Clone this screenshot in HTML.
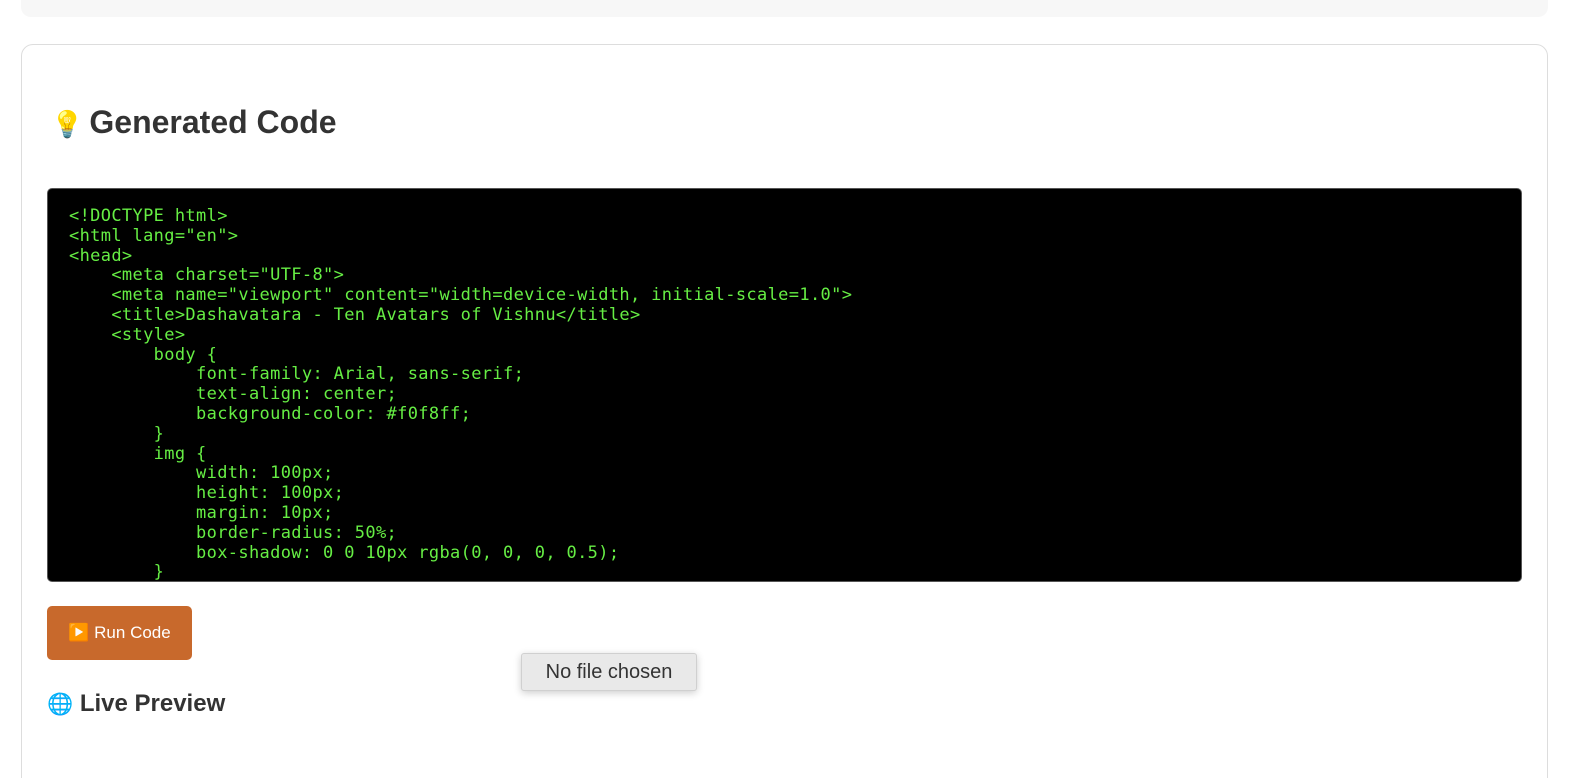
<!DOCTYPE html>
<html><head><meta charset="utf-8"><style>
html,body{margin:0;padding:0;width:1586px;height:778px;overflow:hidden;background:#fff}
body{font-family:"Liberation Sans",Arial,sans-serif}
.wrap{position:relative;width:1586px;height:778px;overflow:hidden}
.top{position:absolute;left:21px;top:-20px;width:1527px;height:37px;background:#f7f7f7;border-radius:10px}
.card{position:absolute;left:21px;top:44px;width:1527px;height:760px;border:1px solid #ddd;border-radius:12px;box-sizing:border-box}
h2{position:absolute;left:51px;top:102px;margin:0;font-size:32px;font-weight:bold;color:#333;line-height:40px}
h2 .e{font-size:26px;margin-right:6px}
pre{position:absolute;left:47px;top:188px;width:1475px;height:394px;margin:0;box-sizing:border-box;background:#000;border:1px solid #555;border-radius:5px;color:#66ee44;font-family:"DejaVu Sans Mono","Liberation Mono",monospace;font-size:17px;line-height:19.8px;padding:18px 0 0 21px;overflow:hidden;letter-spacing:0.35px}
.btn{position:absolute;left:47px;top:606px;width:145px;height:54px;background:#c8692c;border-radius:5px;color:#fff;font-size:17px;line-height:54px;text-align:center}
.file{position:absolute;left:521px;top:653px;width:176px;height:38px;background:#e9e9e9;border:1px solid #d0d0d0;box-sizing:border-box;box-shadow:0 2px 8px rgba(0,0,0,.2);border-radius:3px;font-size:20px;color:#333;text-align:center;line-height:36px}
h3{position:absolute;left:47px;top:689px;margin:0;font-size:24px;color:#333;line-height:30px}
h3 .e{font-size:21px}
</style></head><body><div class="wrap">
<div class="top"></div>
<div class="card"></div>
<h2><span class="e">💡</span>Generated Code</h2>
<pre>&lt;!DOCTYPE html&gt;
&lt;html lang="en"&gt;
&lt;head&gt;
    &lt;meta charset="UTF-8"&gt;
    &lt;meta name="viewport" content="width=device-width, initial-scale=1.0"&gt;
    &lt;title&gt;Dashavatara - Ten Avatars of Vishnu&lt;/title&gt;
    &lt;style&gt;
        body {
            font-family: Arial, sans-serif;
            text-align: center;
            background-color: #f0f8ff;
        }
        img {
            width: 100px;
            height: 100px;
            margin: 10px;
            border-radius: 50%;
            box-shadow: 0 0 10px rgba(0, 0, 0, 0.5);
        }</pre>
<div class="btn">▶️ Run Code</div>
<div class="file">No file chosen</div>
<h3><span class="e">🌐</span> Live Preview</h3>
</div></body></html>
